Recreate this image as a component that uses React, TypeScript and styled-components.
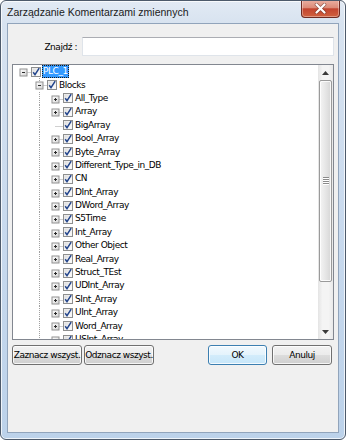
import React from 'react';
import styled, { createGlobalStyle } from 'styled-components';

const ROW_H = 13.4;

type TreeNode = {
  label: string;
  depth: number;
  expander?: 'plus' | 'minus';
  selected?: boolean;
};

const children = [
  'All_Type', 'Array', 'BigArray', 'Bool_Array', 'Byte_Array', 'Different_Type_in_DB', 'CN',
  'DInt_Array', 'DWord_Array', 'S5Time', 'Int_Array', 'Other Object', 'Real_Array', 'Struct_TEst',
  'UDInt_Array', 'SInt_Array', 'UInt_Array', 'Word_Array', 'USInt_Array',
];

const nodes: TreeNode[] = [
  { label: 'PLC_1', depth: 0, expander: 'minus', selected: true },
  { label: 'Blocks', depth: 1, expander: 'minus' },
  ...children.map((label) => ({
    label,
    depth: 2,
    expander: label === 'BigArray' ? undefined : ('plus' as const),
  })),
];

const GlobalStyle = createGlobalStyle`
  html, body { margin: 0; padding: 0; }
  body { width: 346px; height: 440px; overflow: hidden; background: #ffffff; }
  * { box-sizing: border-box; }
`;

const Window = styled.div`
  width: 346px;
  height: 440px;
  border: 1px solid #4d5a6b;
  border-radius: 6px;
  background: linear-gradient(to bottom, #e2eaf4 0px, #d8e3f0 22px, #c9daee 50%, #bcd2ea 100%);
  box-shadow: inset 0 0 0 1px rgba(255, 255, 255, 0.75);
  display: flex;
  flex-direction: column;
  overflow: hidden;
`;

const TitleBar = styled.div`
  height: 22px;
  display: flex;
  align-items: flex-start;
  padding-left: 6px;
`;

const Title = styled.span`
  flex: 1;
  padding-top: 5px;
  font-family: "Liberation Sans", Arial, sans-serif;
  font-size: 10.5px;
  color: #1a1a1a;
`;

const CloseButton = styled.div`
  width: 39px;
  height: 18px;
  margin-right: 5px;
  margin-top: -1px;
  border: 1px solid #6e2b22;
  border-top: none;
  border-radius: 0 0 4px 4px;
  background: linear-gradient(to bottom, #ebb0a2 0%, #dc8b78 45%, #c3442f 52%, #d0613f 100%);
  box-shadow: inset 0 0 0 1px rgba(255, 255, 255, 0.35);
  display: flex;
  align-items: center;
  justify-content: center;
`;

const Client = styled.div`
  flex: 1;
  margin: 0 6px 6px 6px;
  border: 1px solid #91a4bb;
  background: #f0f0f0;
  display: flex;
  flex-direction: column;
  font-family: "DejaVu Sans", Verdana, sans-serif;
  font-size: 9px;
  letter-spacing: -0.45px;
  color: #000000;
`;

const SearchRow = styled.div`
  display: flex;
  align-items: center;
  margin-top: 13px;
  padding-right: 4px;
`;

const SearchLabel = styled.label`
  width: 69px;
  text-align: right;
  margin-right: 5px;
`;

const SearchInput = styled.div`
  flex: 1;
  height: 19px;
  background: #ffffff;
  border: 1px solid #dfe4ea;
  border-top-color: #abadb3;
`;

const TreeBox = styled.div`
  height: 276px;
  margin: 8px 4px 0 4px;
  border: 1px solid #828790;
  background: #ffffff;
  display: flex;
  overflow: hidden;
`;

const TreeRows = styled.div`
  flex: 1;
  padding-left: 2px;
  overflow: hidden;
`;

const Row = styled.div`
  height: ${ROW_H}px;
  display: flex;
  align-items: center;
  white-space: nowrap;
`;

const Label = styled.span<{ $selected?: boolean }>`
  margin-left: 1px;
  padding: 0 1px;
  height: 13px;
  line-height: 13px;
  color: ${(p) => (p.$selected ? '#ffffff' : '#000000')};
  background: ${(p) => (p.$selected ? '#3399ff' : 'transparent')};
  outline: ${(p) => (p.$selected ? '1px dotted #1a1a1a' : 'none')};
  outline-offset: -1px;
`;

const Scrollbar = styled.div`
  width: 15px;
  display: flex;
  flex-direction: column;
  background: linear-gradient(to right, #e4e4e4 0%, #f4f4f4 30%, #f4f4f4 70%, #e9e9e9 100%);
`;

const ArrowButton = styled.div`
  height: 15px;
  display: flex;
  align-items: center;
  justify-content: center;
`;

const Thumb = styled.div`
  height: 202px;
  margin: 0 1px;
  border: 1px solid #9a9a9a;
  border-radius: 2px;
  background: linear-gradient(to right, #f4f4f4 0%, #e6e6e6 50%, #d6d6d6 100%);
  box-shadow: inset 0 0 0 1px rgba(255, 255, 255, 0.8);
  display: flex;
  align-items: center;
  justify-content: center;
`;

const Track = styled.div`
  flex: 1;
`;

const ButtonRow = styled.div`
  display: flex;
  margin-top: 5px;
  padding: 0 6px 0 4px;
`;

const Spacer = styled.div`
  flex: 1;
`;

const Button = styled.button<{ $w: number; $default?: boolean; $gap?: number }>`
  width: ${(p) => p.$w}px;
  height: 20px;
  margin-left: ${(p) => p.$gap ?? 0}px;
  padding: 0;
  font: inherit;
  letter-spacing: inherit;
  color: #000000;
  white-space: nowrap;
  border: 1px solid ${(p) => (p.$default ? '#3c7fb1' : '#707070')};
  border-radius: 3px;
  background: ${(p) =>
    p.$default
      ? 'linear-gradient(#f1f9fe 0%, #e4f3fc 50%, #d3ecfb 50%, #c6e6f9 100%)'
      : 'linear-gradient(#f2f2f2 0%, #ebebeb 50%, #dddddd 50%, #cfcfcf 100%)'};
  box-shadow: inset 0 0 0 1px rgba(255, 255, 255, 0.8);
`;

const CloseGlyph = () => (
  <svg width="13" height="11" viewBox="0 0 13 11">
    <path d="M2.5 1.5 L10.5 9.5 M10.5 1.5 L2.5 9.5" stroke="#5a2a22" strokeWidth="3.6" strokeLinecap="round" opacity="0.55" />
    <path d="M2.5 1.5 L10.5 9.5 M10.5 1.5 L2.5 9.5" stroke="#ffffff" strokeWidth="2.2" strokeLinecap="round" />
  </svg>
);

const Expander = ({ cx, cy, kind }: { cx: number; cy: number; kind: 'plus' | 'minus' }) => (
  <g>
    <rect x={cx - 3.5} y={cy - 3.5} width="7" height="7" fill="url(#expGrad)" stroke="#929292" />
    <line x1={cx - 1.5} y1={cy} x2={cx + 1.5} y2={cy} stroke="#2a2a2a" />
    {kind === 'plus' && <line x1={cx} y1={cy - 1.5} x2={cx} y2={cy + 1.5} stroke="#2a2a2a" />}
  </g>
);

const Guides = ({ node }: { node: TreeNode }) => {
  const w = 16 * (node.depth + 1);
  const cy = Math.round(ROW_H / 2) + 0.5;
  const cx = 16 * node.depth + 8.5;
  const dot = { stroke: '#a0a0a0', strokeDasharray: '1 1' };
  return (
    <svg width={w} height={ROW_H} style={{ flexShrink: 0 }}>
      <defs>
        <linearGradient id="expGrad" x1="0" y1="0" x2="1" y2="1">
          <stop offset="0" stopColor="#ffffff" />
          <stop offset="1" stopColor="#d4d4d4" />
        </linearGradient>
      </defs>
      {node.depth === 1 && <line x1={24.5} y1={0} x2={24.5} y2={cy} {...dot} />}
      {node.depth === 2 && <line x1={24.5} y1={0} x2={24.5} y2={ROW_H} {...dot} />}
      <line x1={node.expander ? cx + 4 : cx} y1={cy} x2={w} y2={cy} {...dot} />
      {node.expander && <Expander cx={cx} cy={cy} kind={node.expander} />}
    </svg>
  );
};

const CheckBox = () => (
  <svg width="10" height="10" viewBox="0 0 10 10" style={{ flexShrink: 0 }}>
    <defs>
      <linearGradient id="cbGrad" x1="0" y1="0" x2="1" y2="1">
        <stop offset="0" stopColor="#dcdcdc" />
        <stop offset="1" stopColor="#ffffff" />
      </linearGradient>
    </defs>
    <rect x="0.5" y="0.5" width="9" height="9" fill="#f4f4f4" stroke="#8e8f8f" />
    <rect x="1.5" y="1.5" width="7" height="7" fill="url(#cbGrad)" />
    <path d="M2.2 5.2 L4 7.6 L8.2 1.2" fill="none" stroke="#23458c" strokeWidth="1.5" />
  </svg>
);

const ArrowGlyph = ({ up }: { up?: boolean }) => (
  <svg width="7" height="4" viewBox="0 0 7 4">
    <path d={up ? 'M0 4 L3.5 0 L7 4 Z' : 'M0 0 L3.5 4 L7 0 Z'} fill="#3a3a3a" />
  </svg>
);

const Grip = () => (
  <svg width="6" height="8" viewBox="0 0 6 8">
    {[0, 2, 4, 6].map((y) => (
      <g key={y}>
        <line x1="0" y1={y + 0.5} x2="6" y2={y + 0.5} stroke="#8a8a8a" />
        <line x1="0" y1={y + 1.5} x2="6" y2={y + 1.5} stroke="#ffffff" />
      </g>
    ))}
  </svg>
);

export default function App() {
  return (
    <>
      <GlobalStyle />
      <Window>
        <TitleBar>
          <Title>Zarządzanie Komentarzami zmiennych</Title>
          <CloseButton>
            <CloseGlyph />
          </CloseButton>
        </TitleBar>
        <Client>
          <SearchRow>
            <SearchLabel>Znajdź :</SearchLabel>
            <SearchInput />
          </SearchRow>
          <TreeBox>
            <TreeRows>
              {nodes.map((n) => (
                <Row key={n.label}>
                  <Guides node={n} />
                  <CheckBox />
                  <Label $selected={n.selected}>{n.label}</Label>
                </Row>
              ))}
            </TreeRows>
            <Scrollbar>
              <ArrowButton>
                <ArrowGlyph up />
              </ArrowButton>
              <Thumb>
                <Grip />
              </Thumb>
              <Track />
              <ArrowButton>
                <ArrowGlyph />
              </ArrowButton>
            </Scrollbar>
          </TreeBox>
          <ButtonRow>
            <Button $w={70}>Zaznacz wszyst.</Button>
            <Button $w={70} $gap={2}>Odznacz wszyst.</Button>
            <Spacer />
            <Button $w={59} $default>OK</Button>
            <Button $w={60} $gap={5}>Anuluj</Button>
          </ButtonRow>
        </Client>
      </Window>
    </>
  );
}
